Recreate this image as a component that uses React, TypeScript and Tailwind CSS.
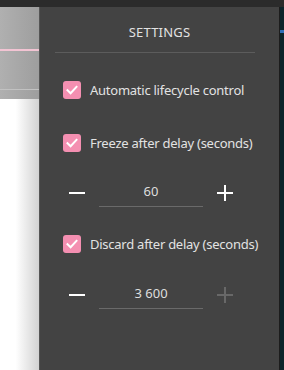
import { useState } from "react";

const Checkbox = ({ checked, onChange }: { checked: boolean; onChange: () => void }) => (
  <button
    onClick={onChange}
    className="flex h-[18px] w-[18px] shrink-0 items-center justify-center rounded-[3px] bg-[#f48fb1]"
  >
    {checked && (
      <svg width="14" height="14" viewBox="0 0 14 14" fill="none">
        <path d="M2.5 7.2 L5.6 10.2 L11.5 3.8" stroke="#fff" strokeWidth="2" strokeLinecap="square" />
      </svg>
    )}
  </button>
);

const Stepper = ({ value, plusDisabled }: { value: string; plusDisabled?: boolean }) => (
  <div className="flex items-center">
    <button className="flex h-[28px] w-[28px] items-center justify-center">
      <svg width="16" height="16" viewBox="0 0 16 16">
        <rect x="0" y="7" width="16" height="2" fill="#fff" />
      </svg>
    </button>
    <div className="ml-[8px] flex h-[28px] w-[104px] items-start justify-center border-b border-[#6a6a6a] pt-[3px] text-[13px] leading-[18px] text-[#dedede]">
      {value}
    </div>
    <button className="ml-[8px] flex h-[28px] w-[28px] items-center justify-center">
      <svg width="16" height="16" viewBox="0 0 16 16">
        <rect x="0" y="7" width="16" height="2" fill={plusDisabled ? "#686868" : "#fff"} />
        <rect x="7" y="0" width="2" height="16" fill={plusDisabled ? "#686868" : "#fff"} />
      </svg>
    </button>
  </div>
);

export default function App() {
  const [auto, setAuto] = useState(true);
  const [freeze, setFreeze] = useState(true);
  const [discard, setDiscard] = useState(true);

  return (
    <div
      className="flex h-[370px] w-[284px] flex-col overflow-hidden bg-[#2b2b2b]"
      style={{ fontFamily: '"Noto Sans", "Open Sans", sans-serif' }}
    >
      {/* top bar */}
      <div className="h-[7px] shrink-0 bg-[#2b2b2b]" />

      <div className="flex flex-1">
        {/* page behind the panel */}
        <div className="flex w-[39px] shrink-0 flex-col">
          <div className="flex h-[92px] flex-col bg-gradient-to-r from-[#b0b0b0] to-[#9e9e9e]">
            <div className="mt-[42px] h-[2px] bg-[#f2c4d3]" />
            <div className="mt-[38px] h-px bg-[#c2c2c2]" />
          </div>
          <div className="flex-1 bg-gradient-to-r from-white from-40% to-[#d2d2d2]" />
        </div>

        {/* settings panel */}
        <div className="flex w-[240px] shrink-0 flex-col border-l border-[#555] bg-[#434343] text-[#e2e2e2]">
          <div className="pt-[17px] text-center text-[13px] leading-[17px] tracking-[0.2px]">SETTINGS</div>
          <div className="ml-[15px] mr-[24px] mt-[11px] h-px bg-[#5c5c5c]" />

          <div className="ml-[23px] mt-[28px] flex flex-col text-[13px] leading-[18px] tracking-[-0.25px]">
            <label className="flex items-center gap-[9px]">
              <Checkbox checked={auto} onChange={() => setAuto(!auto)} />
              <span>Automatic lifecycle control</span>
            </label>

            <label className="mt-[35px] flex items-center gap-[9px]">
              <Checkbox checked={freeze} onChange={() => setFreeze(!freeze)} />
              <span>Freeze after delay (seconds)</span>
            </label>

            <div className="mt-[27px] tracking-normal">
              <Stepper value="60" />
            </div>

            <label className="mt-[28px] flex items-center gap-[9px]">
              <Checkbox checked={discard} onChange={() => setDiscard(!discard)} />
              <span>Discard after delay (seconds)</span>
            </label>

            <div className="mt-[28px] tracking-normal">
              <Stepper value="3 600" plusDisabled />
            </div>
          </div>
        </div>

        {/* right edge */}
        <div className="w-px shrink-0 bg-[#1c1c1c]" />
        <div className="flex flex-1 flex-col bg-[#0c252b]">
          <div className="mt-[23px] h-[3px] bg-[#2f6fb8]" />
        </div>
      </div>
    </div>
  );
}
